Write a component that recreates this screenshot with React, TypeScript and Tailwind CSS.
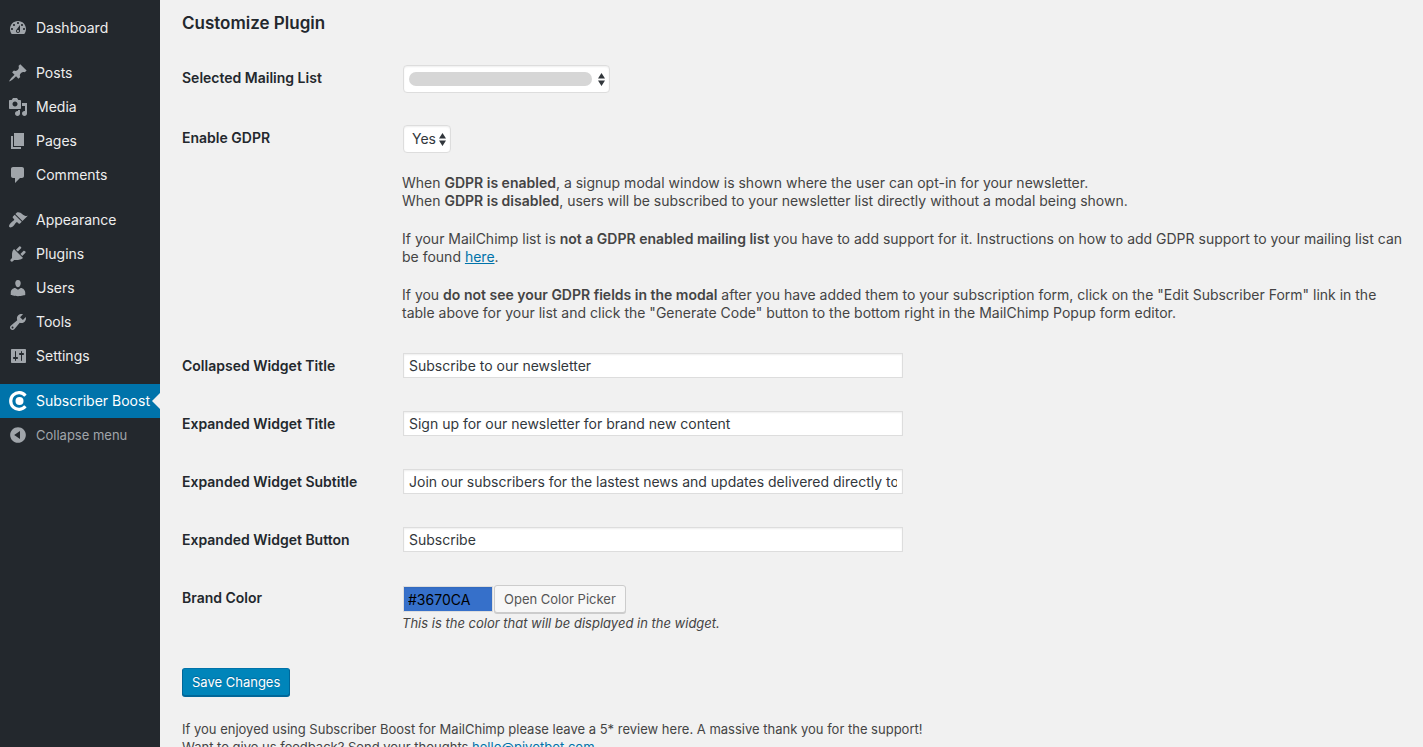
import type { ReactNode } from "react";

type MenuEntry = { label: string; path: string; gap?: boolean };

const menu: MenuEntry[] = [
  {
    label: "Dashboard",
    path: "M3.76 16h12.48c1.1-1.37 1.76-3.11 1.76-5 0-4.42-3.58-8-8-8s-8 3.58-8 8c0 1.89.66 3.63 1.76 5zM10 4c.55 0 1 .45 1 1s-.45 1-1 1-1-.45-1-1 .45-1 1-1zM6 6c.55 0 1 .45 1 1s-.45 1-1 1-1-.45-1-1 .45-1 1-1zm8 0c.55 0 1 .45 1 1s-.45 1-1 1-1-.45-1-1 .45-1 1-1zm-5.37 5.55L12 7v6c0 1.1-.9 2-2 2s-2-.9-2-2c0-.57.24-1.08.63-1.45zM4 10c.55 0 1 .45 1 1s-.45 1-1 1-1-.45-1-1 .45-1 1-1zm12 0c.55 0 1 .45 1 1s-.45 1-1 1-1-.45-1-1 .45-1 1-1zm-5 3c0-.55-.45-1-1-1s-1 .45-1 1 .45 1 1 1 1-.45 1-1z",
  },
  {
    label: "Posts",
    gap: true,
    path: "M10.44 3.02l1.82-1.82 6.36 6.35-1.83 1.82c-1.05-.68-2.48-.57-3.41.36l-.75.75c-.92.93-1.04 2.35-.35 3.41l-1.83 1.82-2.41-2.41-2.8 2.79c-.42.42-3.38 2.71-3.8 2.29s1.86-3.39 2.28-3.81l2.79-2.79L4.1 9.36l1.83-1.82c1.05.69 2.48.57 3.4-.36l.75-.75c.93-.92 1.05-2.35.36-3.41z",
  },
  {
    label: "Media",
    path: "M13 11V4c0-.55-.45-1-1-1h-1.67L9 1H5L3.67 3H2c-.55 0-1 .45-1 1v7c0 .55.45 1 1 1h10c.55 0 1-.45 1-1zM7 4.5c1.38 0 2.5 1.12 2.5 2.5S8.38 9.5 7 9.5 4.5 8.38 4.5 7 5.62 4.5 7 4.5zM14 6h5v10.5c0 1.38-1.12 2.5-2.5 2.5S14 17.88 14 16.5s1.12-2.5 2.5-2.5c.17 0 .34.02.5.05V9h-3V6zm-4 8.05V13h2v3.5c0 1.38-1.12 2.5-2.5 2.5S7 17.88 7 16.5 8.12 14 9.5 14c.17 0 .34.02.5.05z",
  },
  { label: "Pages", path: "M6 15V2h10v13H6zm-1 1h8v2H3V5h2v11z" },
  {
    label: "Comments",
    path: "M5 2h9c1.1 0 2 .9 2 2v7c0 1.1-.9 2-2 2h-2l-5 5v-5H5c-1.1 0-2-.9-2-2V4c0-1.1.9-2 2-2z",
  },
  {
    label: "Appearance",
    gap: true,
    path: "M14.48 11.06L7.41 3.99l1.5-1.5c.5-.56 2.3-.47 3.51.32 1.21.8 1.43 1.28 2.91 2.1 1.18.64 2.45 1.26 4.45.85zm-.71.71L6.7 4.7 4.93 6.47c-.39.39-.39 1.02 0 1.41l1.06 1.06c.39.39.39 1.03 0 1.42-.6.6-1.43 1.11-2.21 1.69-.35.26-.7.53-1.01.84C1.43 14.23.4 16.08 1.4 17.07c.99 1 2.84-.03 4.18-1.36.31-.31.58-.66.85-1.02.57-.78 1.08-1.61 1.69-2.21.39-.39 1.02-.39 1.41 0l1.06 1.06c.39.39 1.02.39 1.41 0z",
  },
  {
    label: "Plugins",
    path: "M13.11 4.36L9.87 7.6 8 5.73l3.24-3.24c.35-.34 1.05-.2 1.56.32.52.51.66 1.21.31 1.55zm-8 1.77l.91-1.12 9.01 9.01-1.19.84c-.71.71-2.63 1.16-3.82 1.16H6.14L4.9 17.26c-.59.59-1.54.59-2.12 0-.59-.58-.59-1.53 0-2.12l1.24-1.24v-3.88c0-1.13.4-3.19 1.09-3.89zm7.26 3.97l3.24-3.24c.34-.35 1.04-.21 1.55.31.52.51.66 1.21.31 1.55l-3.24 3.25z",
  },
  {
    label: "Users",
    path: "M10 9.25c-2.27 0-2.73-3.44-2.73-3.44C7 4.02 7.82 2 9.97 2c2.16 0 2.98 2.02 2.71 3.81 0 0-.41 3.44-2.68 3.44zm0 2.57L12.72 10c2.39 0 4.52 2.33 4.52 4.53v2.49s-3.65 1.13-7.24 1.13c-3.65 0-7.24-1.13-7.24-1.13v-2.49c0-2.25 1.94-4.48 4.47-4.48z",
  },
  {
    label: "Tools",
    path: "M16.68 9.77c-1.34 1.34-3.3 1.67-4.95.99l-5.41 6.52c-.99.99-2.59.99-3.58 0s-.99-2.59 0-3.57l6.52-5.42c-.68-1.65-.35-3.61.99-4.95 1.28-1.28 3.12-1.62 4.72-1.06l-2.89 2.89 2.82 2.82 2.86-2.87c.53 1.58.18 3.39-1.08 4.65zM3.81 16.21c.4.39 1.04.39 1.43 0 .4-.4.4-1.04 0-1.43-.39-.4-1.03-.4-1.43 0-.39.39-.39 1.03 0 1.43z",
  },
  {
    label: "Settings",
    path: "M18 16V4c0-.55-.45-1-1-1H4c-.55 0-1 .45-1 1v12c0 .55.45 1 1 1h13c.55 0 1-.45 1-1zM8 11h1c.55 0 1 .45 1 1s-.45 1-1 1H8v1.5c0 .28-.22.5-.5.5s-.5-.22-.5-.5V13H6c-.55 0-1-.45-1-1s.45-1 1-1h1V5.5c0-.28.22-.5.5-.5s.5.22.5.5V11zm5-2h-1c-.55 0-1-.45-1-1s.45-1 1-1h1V5.5c0-.28.22-.5.5-.5s.5.22.5.5V7h1c.55 0 1 .45 1 1s-.45 1-1 1h-1v5.5c0 .28-.22.5-.5.5s-.5-.22-.5-.5V9z",
  },
];

const collapsePath =
  "M10 2.16c4.33 0 7.84 3.51 7.84 7.84s-3.51 7.84-7.84 7.84S2.16 14.33 2.16 10 5.71 2.16 10 2.16zm2 11.72V6.12L6.18 9.97z";

function MenuIcon({ path }: { path: string }) {
  return (
    <svg viewBox="0 0 20 20" className="size-5 shrink-0 fill-[#a0a5aa]" fillRule="evenodd" aria-hidden="true">
      <path d={path} />
    </svg>
  );
}

function Sidebar() {
  return (
    <nav className="w-40 shrink-0 bg-[#23282d] pt-[11px] text-sm text-[#eeeeee]">
      <ul>
        {menu.map((item) => (
          <li key={item.label} className={item.gap ? "mt-[11px]" : ""}>
            <a href="#" className="flex h-[34px] items-center gap-2 pl-2">
              <MenuIcon path={item.path} />
              {item.label}
            </a>
          </li>
        ))}
        <li className="mt-[11px]">
          <a href="#" aria-current="page" className="relative flex h-[34px] items-center gap-2 bg-[#0073aa] pl-2 whitespace-nowrap text-white">
            <svg viewBox="0 0 20 20" className="size-5 shrink-0" aria-hidden="true">
              <path d="M17.4 4.7A8.3 8.3 0 1 0 17.4 15.3" fill="none" stroke="#fff" strokeWidth="3.2" />
              <circle cx="11.5" cy="10" r="4" fill="#fff" />
            </svg>
            Subscriber Boost
            <svg viewBox="0 0 8 16" className="absolute top-[9px] right-0 h-4 w-2 fill-[#f1f1f1]" aria-hidden="true">
              <path d="M8 0v16L0 8z" />
            </svg>
          </a>
        </li>
        <li>
          <button type="button" className="flex h-[34px] items-center gap-2 pl-2 text-[13px] text-[#a0a5aa]">
            <MenuIcon path={collapsePath} />
            Collapse menu
          </button>
        </li>
      </ul>
    </nav>
  );
}

function Row({ label, htmlFor, children }: { label: string; htmlFor: string; children: ReactNode }) {
  return (
    <div className="flex">
      <label htmlFor={htmlFor} className="w-[220px] shrink-0 pt-5 leading-[18px] font-semibold text-[#23282d]">
        {label}
      </label>
      <div className="min-w-0 flex-1 pt-4 leading-[18px]">{children}</div>
    </div>
  );
}

function Arrows() {
  return (
    <svg viewBox="0 0 7 13" className="pointer-events-none absolute top-2 right-[5px] h-[13px] w-[7px] fill-[#32373c]" aria-hidden="true">
      <path d="M3.5 0L7 5.5H0zM3.5 13L0 7.5h7z" />
    </svg>
  );
}

function TextField({ id, label, value }: { id: string; label: string; value: string }) {
  return (
    <Row label={label} htmlFor={id}>
      <input
        id={id}
        type="text"
        defaultValue={value}
        className="mb-[17px] ml-px block h-[25px] w-full max-w-[500px] border border-[#dddddd] bg-white px-[5px] text-[#32373c] shadow-[inset_0_1px_2px_rgba(0,0,0,0.07)]"
      />
    </Row>
  );
}

export default function App() {
  return (
    <div className="flex min-h-screen bg-[#f1f1f1] font-['Inter',sans-serif] text-sm text-[#444444]">
      <Sidebar />
      <main className="min-w-0 flex-1 pt-3 pr-4 pl-[22px]">
        <h2 className="text-[17px] leading-[22px] font-semibold text-[#23282d]">Customize Plugin</h2>
        <form className="mt-[15px]">
          <Row label="Selected Mailing List" htmlFor="list">
            <div className="relative mb-4 ml-px h-7 w-[207px]">
              <select id="list" className="size-full appearance-none rounded border border-[#dddddd] bg-white shadow-[inset_0_1px_2px_rgba(0,0,0,0.07)]" />
              <span className="pointer-events-none absolute top-[7px] left-[6px] h-[14px] w-[183px] rounded-full bg-[#d6d6d6]" />
              <Arrows />
            </div>
          </Row>
          <Row label="Enable GDPR" htmlFor="gdpr">
            <div className="relative ml-px h-7 w-12">
              <select
                id="gdpr"
                className="size-full appearance-none rounded border border-[#dddddd] bg-white pl-2 text-[#32373c] shadow-[inset_0_1px_2px_rgba(0,0,0,0.07)]"
              >
                <option>Yes</option>
                <option>No</option>
              </select>
              <Arrows />
            </div>
            <p className="mt-[21px]">
              When <b className="font-semibold">GDPR is enabled</b>, a signup modal window is shown where the user can opt-in for your newsletter.
              <br />
              When <b className="font-semibold">GDPR is disabled</b>, users will be subscribed to your newsletter list directly without a modal being shown.
            </p>
            <p className="mt-5">
              If your MailChimp list is <b className="font-semibold">not a GDPR enabled mailing list</b> you have to add support for it. Instructions on how to add GDPR support to your mailing list can be found{" "}
              <a href="#" className="text-[#0073aa] underline">here</a>.
            </p>
            <p className="mt-5 mb-[15px]">
              If you <b className="font-semibold">do not see your GDPR fields in the modal</b> after you have added them to your subscription form, click on the "Edit Subscriber Form" link in the table above for your list and click the "Generate Code" button to the bottom right in the MailChimp Popup form editor.
            </p>
          </Row>
          <TextField id="collapsed-title" label="Collapsed Widget Title" value="Subscribe to our newsletter" />
          <TextField id="expanded-title" label="Expanded Widget Title" value="Sign up for our newsletter for brand new content" />
          <TextField
            id="expanded-subtitle"
            label="Expanded Widget Subtitle"
            value="Join our subscribers for the lastest news and updates delivered directly to your inbox"
          />
          <TextField id="expanded-button" label="Expanded Widget Button" value="Subscribe" />
          <Row label="Brand Color" htmlFor="color">
            <div className="ml-px flex items-center gap-px">
              <input
                id="color"
                type="text"
                defaultValue="#3670CA"
                className="h-[26px] w-[90px] border border-[#dddddd] bg-[#3670ca] px-1 text-black shadow-[inset_0_1px_2px_rgba(0,0,0,0.07)]"
              />
              <button
                type="button"
                className="h-7 rounded-[3px] border border-[#cccccc] bg-[#f7f7f7] px-[9px] text-[13px] text-[#555555] shadow-[0_1px_0_#cccccc]"
              >
                Open Color Picker
              </button>
            </div>
            <p className="mt-px mb-4 text-[13px] text-[#444444] italic">This is the color that will be displayed in the widget.</p>
          </Row>
          <button
            type="submit"
            className="mt-5 block h-7 rounded-[3px] border border-[#006799] border-t-[#0073aa] bg-[#0085ba] px-[9px] text-[13px] text-white shadow-[0_1px_0_#006799] [text-shadow:0_-1px_1px_#006799]"
          >
            Save Changes
          </button>
        </form>
        <p className="mt-6 text-[13px] leading-[18px]">
          If you enjoyed using Subscriber Boost for MailChimp please leave a 5* review here. A massive thank you for the support!
          <br />
          Want to give us feedback? Send your thoughts{" "}
          <a href="#" className="text-[#0073aa] underline">hello@pivotbot.com</a>
        </p>
      </main>
    </div>
  );
}
